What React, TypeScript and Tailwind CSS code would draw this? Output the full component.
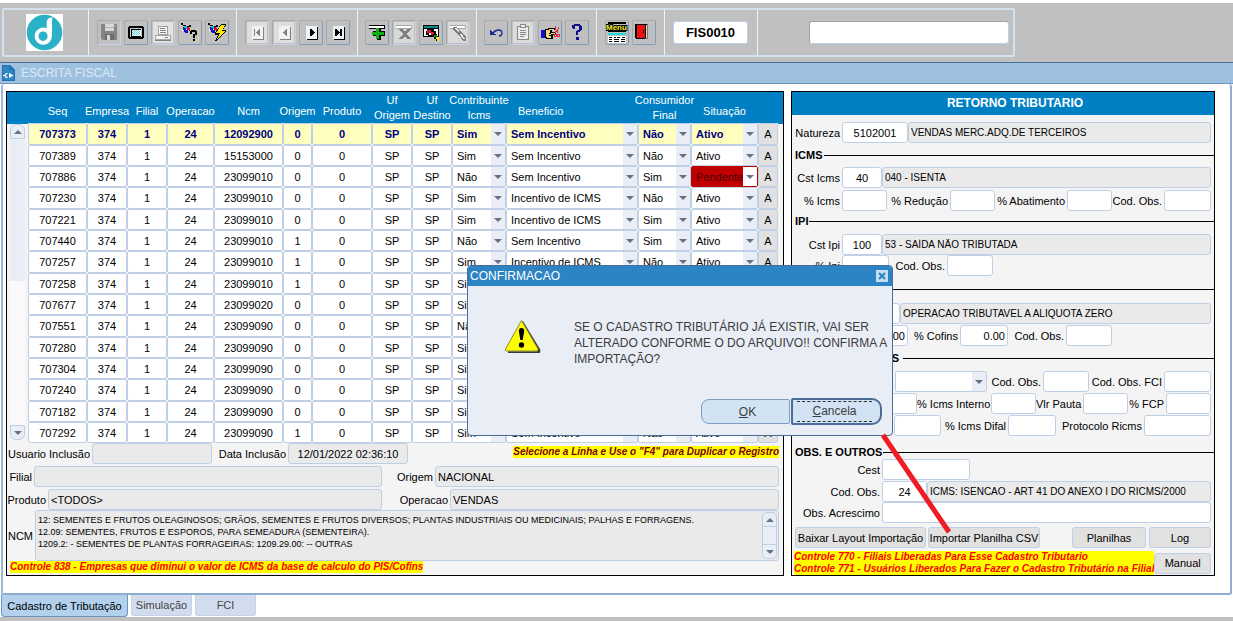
import { useId, type ReactNode } from "react";

const fieldBase = "h-[21px] min-w-0 rounded-[3px] border border-[#bfd0e6] text-black outline-none";

type FieldProps = {
  label: string;
  labelClass?: string;
  inputClass?: string;
  value?: string;
  hideLabel?: boolean;
  readOnly?: boolean;
};

function Field({ label, labelClass = "", inputClass = "", value = "", hideLabel, readOnly }: FieldProps) {
  const id = useId();
  const tone = readOnly ? "bg-[#eaeaea]" : "bg-white";
  return (
    <>
      {hideLabel ? (
        <span className={`shrink-0 ${labelClass}`} />
      ) : (
        <label htmlFor={id} className={`shrink-0 pr-0.5 text-right whitespace-nowrap ${labelClass}`}>
          {label}
        </label>
      )}
      <input
        id={id}
        aria-label={hideLabel ? label : undefined}
        defaultValue={value}
        readOnly={readOnly}
        className={`${fieldBase} text-[11px] ${tone} ${inputClass}`}
      />
    </>
  );
}

function Description({ label, value }: { label: string; value: string }) {
  return (
    <input
      aria-label={label}
      readOnly
      defaultValue={value}
      className={`${fieldBase} flex-1 bg-[#eaeaea] px-0.5 text-[10px]`}
    />
  );
}

function Section({ title, className = "", titleClass = "" }: { title?: string; className?: string; titleClass?: string }) {
  return (
    <div className={`flex h-3 items-center gap-px pl-[3px] ${className}`}>
      {title && <h3 className={`text-[11px] leading-3 font-bold whitespace-nowrap ${titleClass}`}>{title}</h3>}
      <span className="h-px flex-1 bg-black" />
    </div>
  );
}

function Row({ className = "", children }: { className?: string; children: ReactNode }) {
  return <div className={`flex items-center pr-[3px] ${className}`}>{children}</div>;
}

function Arrow({ up }: { up?: boolean }) {
  return (
    <svg width="8" height="4" viewBox="0 0 8 4" aria-hidden="true">
      <path d={up ? "M0 4L4 0L8 4Z" : "M0 0L4 4L8 0Z"} fill="#6a6f86" />
    </svg>
  );
}

function Picker({ label, value, tone, className = "" }: { label: string; value: string; tone: string; className?: string }) {
  const alert = value === "Pendente";
  return (
    <span className={`grid ${className}`}>
      <select
        aria-label={label}
        defaultValue={value}
        className={`col-start-1 row-start-1 h-full w-full min-w-0 appearance-none rounded-[2px] border pl-1 outline-none ${
          alert ? "border-[#c00000] bg-[#c00000] text-[#4a0000]" : `border-[#bfd0e6] ${tone}`
        }`}
      >
        <option value={value}>{value}</option>
      </select>
      <span
        className={`pointer-events-none col-start-1 row-start-1 my-px mr-px flex w-[14px] items-center justify-center justify-self-end ${
          alert ? "bg-white" : "bg-[#e9eef6]"
        }`}
      >
        <Arrow />
      </span>
    </span>
  );
}

/* ---------- toolbar ---------- */

function ToolButton({ label, disabled, children }: { label: string; disabled?: boolean; children: ReactNode }) {
  return (
    <button
      type="button"
      aria-label={label}
      className={`flex h-[25px] w-6 shrink-0 items-center justify-center rounded-[2px] border ${
        disabled ? "border-t-[#a8a8a8] border-l-[#a8a8a8] border-r-[#c6d3e4] border-b-[#c6d3e4]" : "border-t-[#a8a8a8] border-l-[#a8a8a8] border-r-[#7d9cc2] border-b-[#7d9cc2]"
      }`}
    >
      <svg width="22" height="23" viewBox="1 1 22 23" shapeRendering="crispEdges" aria-hidden="true">
        {children}
      </svg>
    </button>
  );
}

function Group({ className = "", children }: { className?: string; children: ReactNode }) {
  return (
    <div className={`flex items-center gap-[3px] border-r border-[#eaf2fb] pb-px ${className}`}>
      {children}
    </div>
  );
}

function Nav({ children, off }: { children: ReactNode; off?: boolean }) {
  const ink = off ? "#808080" : "#000";
  return (
    <>
      {off && <path fill="#dedede" d="M2 2h20v21H2z" />}
      <path fill={off ? "#f2f2f2" : "#eef3f8"} d="M7 6h12v14H7z" />
      <path fill={ink} d="M18 7h1v13h-1zM8 19h11v1H8z" />
      <g fill={ink}>{children}</g>
    </>
  );
}

function Torch() {
  return (
    <g>
      <path fill="#000" d="M3 3h2v2H3zM5 5h3v1H5zM8 6h3v1H8zM11 5h2v2h-2zM5 7h1v2H5z" />
      <path fill="#00c8d8" d="M6 6h3v3H6z" />
      <path fill="#d00020" d="M9 7h2v3H9zM11 8h1v3h-1z" />
      <path fill="#1010c0" d="M5 8h3v2h2v3H7v-1H6v-2H5z" />
      <path fill="#fff" d="M4 9h1v2H4zM8 9h1v1H8z" />
    </g>
  );
}

function Bar({ ink = "#000" }: { ink?: string }) {
  return (
    <>
      <path fill="#fff" d="M4 5h16v4H4z" />
      <path fill={ink} d="M4 5h16v1H4zM19 5h1v4h-1zM4 8h16v1H4z" />
    </>
  );
}

function Toolbar() {
  return (
    <header className="border-t-[3px] border-b border-t-white border-b-[#4b6c98] bg-[#c0c0c0] pt-[5px] pr-4 pb-[5px] pl-[2px]">
      <div className="flex h-[49px] w-[1013px] max-w-full rounded-[2px] border-2 border-[#d3e0f0]">
        <Group className="w-[85px] justify-center pr-1">
          <svg width="37" height="37" viewBox="0 0 37 37" role="img" aria-label="Logotipo">
            <rect width="37" height="37" fill="#fff" />
            <circle cx="18.500" cy="18.500" r="17.800" fill="#2bb1c5" />
            <path
              d="M26.500 3.300c-3.400.2-5.800 1.800-5.800 5.400v5.600A8.600 8.600 0 1 0 23 28.500c2.200-2 3-4.500 3-8V7zM17 17.600c2.600 0 4.600 2 4.600 4.700S19.600 27 17 27s-4.500-2-4.500-4.700 2-4.700 4.500-4.700z"
              fill="#fff"
              fillRule="evenodd"
            />
          </svg>
        </Group>
        <Group className="w-[148px] pl-2">
          <ToolButton label="Salvar" disabled>
            <path fill="#858585" d="M4 4h16v16H5v-1H4z" />
            <path fill="#d8d8d8" d="M8 4h9v7H8z" />
            <path fill="#b0b0b0" d="M8 7h9v1H8zM18 5h1v2h-1z" />
            <path fill="#6e6e6e" d="M8 14h9v6H8z" />
            <path fill="#d8d8d8" d="M10 15h3v5h-3z" />
          </ToolButton>
          <ToolButton label="Tela">
            <path fill="#000" d="M5 6h14v1h1v11h-1v1H5v-1H4V7h1z" />
            <path fill="#c8c8c8" d="M6 8h12v9H6z" />
            <path fill="#000" d="M7 9h10v8H7z" />
            <path fill="#dff" d="M8 10h9v6H8z" />
            <path fill="#7fc7c7" d="M8 10h1v1H8zm2 0h1v1h-1zm2 0h1v1h-1zm2 0h1v1h-1zM9 11h1v1H9zm2 0h1v1h-1zm2 0h1v1h-1zm2 0h1v1h-1zM8 12h1v1H8zm2 0h1v1h-1zm2 0h1v1h-1zm2 0h1v1h-1zM9 13h1v1H9zm2 0h1v1h-1zm2 0h1v1h-1zm2 0h1v1h-1zM8 14h1v1H8zm2 0h1v1h-1zm2 0h1v1h-1zm2 0h1v1h-1z" />
          </ToolButton>
          <ToolButton label="Imprimir" disabled>
            <path fill="#e2e2e2" d="M2 2h20v21H2z" />
            <path fill="#fafafa" stroke="#a0a0a0" d="M7.500 6.500h9v8h-9z" />
            <path fill="#808080" d="M9 8h5v1H9zM9 10h6v1H9zM9 12h6v1H9z" />
            <path fill="#f4f4f4" stroke="#a8a8a8" d="M4.500 15.500h15v4h-15z" />
            <path fill="#808080" d="M4 20h16v1H4zM14 17h3v1h-3z" />
          </ToolButton>
          <ToolButton label="Consultar">
            <Torch />
            <path fill="#eee35a" d="M12 9h1v1h-1zm2 2h1v1h-1zm4-2h1v1h-1zm2 2h1v1h-1zm-1 3h1v1h-1zm1 3h1v1h-1zm-1 3h1v1h-1zm-8 0h1v1h-1zm1-5h1v1h-1zm5 5h1v1h-1zm3-8h1v1h-1zm0 7h1v1h-1z" />
            <path fill="#000" d="M12 11h2v3h-2zM13 10h5v2h-5zM17 11h2v4h-2zM15 14h3v1h-3zM15 15h2v3h-2zM15 19h2v2h-2z" />
          </ToolButton>
          <ToolButton label="Executar consulta">
            <Torch />
            <path fill="#000" d="M16 4h5v2h-1l-2 4h3v1l-9 10h-2l3-6h-3v-2z" />
            <path fill="#ffea00" d="M16 5h4l-3 6h3l-8 8 3-6h-4z" />
          </ToolButton>
        </Group>
        <Group className="w-[121px] pl-2">
          <ToolButton label="Primeiro" disabled>
            <Nav off>
              <path d="M9 9h1v7H9zM14 9h1v7h-1zM13 10h1v5h-1zM12 11h1v3h-1zM11 12h1v1h-1z" />
            </Nav>
          </ToolButton>
          <ToolButton label="Anterior" disabled>
            <Nav off>
              <path d="M14 9h1v7h-1zM13 10h1v5h-1zM12 11h1v3h-1zM11 12h1v1h-1z" />
            </Nav>
          </ToolButton>
          <ToolButton label="Próximo">
            <Nav>
              <path d="M11 9h2v7h-2zM13 10h1v5h-1zM14 11h1v3h-1zM15 12h1v1h-1z" />
            </Nav>
          </ToolButton>
          <ToolButton label="Último">
            <Nav>
              <path d="M9 9h2v7H9zM11 10h1v5h-1zM12 11h1v3h-1zM13 12h1v1h-1zM14 9h2v7h-2z" />
            </Nav>
          </ToolButton>
        </Group>
        <Group className="w-[119px] pl-[7px]">
          <ToolButton label="Inserir registro">
            <Bar />
            <path fill="#000" d="M11 8h5v3h4v5h-4v4h-4v-4H8v-5h3z" />
            <path fill="#10b010" d="M11 8h3v4h5v3h-5v4h-3v-4H7v-3h4z" />
          </ToolButton>
          <ToolButton label="Excluir registro" disabled>
            <path fill="#d9d9d9" d="M2 2h20v21H2z" />
            <Bar ink="#a8a8a8" />
            <path fill="#808080" d="M7 9h4l2 3 2-3h4l-4 5 4 5h-4l-2-3-2 3H7l4-5z" />
          </ToolButton>
          <ToolButton label="Pesquisar">
            <path fill="#000" d="M4 5h16v12H4z" />
            <path fill="#008b8b" d="M5 6h14v2H5z" />
            <path fill="#fff" d="M5 9h14v7H5z" />
            <path fill="#000" d="M8 9h7v2h2v4h-3v2H9v-2H7v-4h1z" />
            <path fill="#e01030" d="M8 10h4v3H8zM12 12h3v3h-3z" />
            <path fill="#fff" d="M10 13h2v2h-2z" />
            <path fill="#000" d="M14 14h4v2h2v5h-3v-2h-2v-2h-1z" />
            <path fill="#109010" d="M15 15h3v2h-3z" />
            <path fill="#ffe600" d="M17 17h3v4h-2v-2h-1z" />
          </ToolButton>
          <ToolButton label="Limpar" disabled>
            <path fill="#d9d9d9" d="M2 2h20v21H2z" />
            <Bar ink="#a8a8a8" />
            <path fill="#808080" d="M7 7h3l10 9v5h-3l-4-6-6-5z" />
            <path fill="#ececec" d="M9 8h1l3 3v1h-1zM14 14h2l3 5h-2z" />
          </ToolButton>
        </Group>
        <Group className="w-[120px] pl-[7px]">
          <ToolButton label="Desfazer">
            <path fill="none" stroke="#1a2a90" strokeWidth="1.300" shapeRendering="auto" d="M9 13c3-4 9-4 9 0 0 2-1 3-3 3" />
            <path fill="#1a2a90" d="M6 10h1v1h1v1h1v1h1v1h2v1H6z" />
          </ToolButton>
          <ToolButton label="Colar" disabled>
            <path fill="#dcdcdc" d="M2 2h20v21H2z" />
            <path fill="#ececec" stroke="#888" d="M6.500 6.500h11v13h-11z" />
            <path fill="#e8e8e8" stroke="#888" d="M9.500 4.500h5v3h-5z" />
            <path fill="#888" d="M9 10h6v1H9zM9 12h6v1H9zM9 14h6v1H9zM9 16h4v1H9z" />
          </ToolButton>
          <ToolButton label="Recortar">
            <path fill="#1010d0" d="M3 10h4v8H3z" />
            <path fill="#000" d="M7 9h3V8h7v2h-3v2h4v3h-3v4H8v-1H7z" />
            <path fill="#f1dc72" d="M8 10h3V9h5v1h-4v3h5v1h-4v4H9v-1H8z" />
            <path fill="#000" d="M11 13h2v1h-2zM11 15h2v1h-2z" />
            <path fill="none" stroke="#e03040" d="M16.500 6.500h1v3l3 4M20.500 6.500v2l-4 5" />
            <path fill="none" stroke="#e03040" d="M16.500 14.500h2v2h-2zM19.500 14.500h2v2h-2z" />
          </ToolButton>
          <ToolButton label="Ajuda">
            <path fill="#10108a" d="M7 5h2V4h6v1h1v1h1v4h-1v1h-1v1h-2v3h-2v-4h1v-1h2V6h-4v3H8V8H7zM11 17h3v3h-3z" />
          </ToolButton>
        </Group>
        <Group className="w-[68px] pl-2">
          <ToolButton label="Menu">
            <path fill="#000" d="M3 2h18v2H3zM3 11h18v1H3z" />
            <text x="1" y="10" fill="#f5ee20" stroke="#000" strokeWidth="2" paintOrder="stroke" fontSize="8" fontWeight="bold" fontFamily="Liberation Sans, sans-serif">
              Menu
            </text>
            <path fill="#20d8d8" d="M3 13h18v2H3z" />
            <path fill="#fff" d="M3 16h18v7H3z" />
            <path fill="#000" d="M4 17h3v1H4zm5 0h2v1H9zm3 0h3v1h-3zm5 0h3v1h-3zM4 19h3v1H4zm5 0h5v1H9zm7 0h4v1h-4zM4 21h3v1H4zm5 0h5v1H9zm7 0h4v1h-4z" />
          </ToolButton>
          <ToolButton label="Sair">
            <path fill="#d8d8d8" stroke="#777" d="M7.500 4.500h8v14h-8z" />
            <path fill="#000" d="M3 4h2v14H3zM4 4h11v1H4z" />
            <path fill="#f01010" d="M5 5h8v12l-2 2-6-1z" />
            <path fill="#000" d="M11 10h1v3h-1zM13 5h1v13h-1zM4 18h9v1H4z" />
          </ToolButton>
        </Group>
        <Group className="w-[93px] pl-2">
          <input
            aria-label="Código da tela"
            defaultValue="FIS0010"
            className="h-[23px] w-[75px] rounded-[3px] border border-[#bfd0e6] bg-white text-center text-[13px] font-bold outline-none"
          />
        </Group>
        <div className="flex flex-1 items-center justify-end pr-1">
          <input
            aria-label="Pesquisa"
            className="h-[23px] w-[200px] rounded-[3px] border border-t-[#a0a4aa] border-r-[#bfd0e6] border-b-[#bfd0e6] border-l-[#a0a4aa] bg-white outline-none"
          />
        </div>
      </div>
    </header>
  );
}

/* ---------- grid of tax records ---------- */

type RecordRow = [string, string, string, string, string, string, string, string];

const B1 = "Sem Incentivo";
const B2 = "Incentivo de ICMS";

// seq, ncm, origem, contribuinte, beneficio, consumidor, situacao, uf
const records: RecordRow[] = [
  ["707373", "12092900", "0", "Sim", B1, "Não", "Ativo", "SP"],
  ["707389", "15153000", "0", "Sim", B1, "Não", "Ativo", "SP"],
  ["707886", "23099010", "0", "Não", B1, "Sim", "Pendente", "SP"],
  ["707230", "23099010", "0", "Sim", B2, "Não", "Ativo", "SP"],
  ["707221", "23099010", "0", "Sim", B2, "Sim", "Ativo", "SP"],
  ["707440", "23099010", "1", "Não", B1, "Sim", "Ativo", "SP"],
  ["707257", "23099010", "1", "Sim", B2, "Não", "Ativo", "SP"],
  ["707258", "23099010", "1", "Sim", B2, "Sim", "Ativo", "SP"],
  ["707677", "23099020", "0", "Sim", B1, "Sim", "Ativo", "SP"],
  ["707551", "23099090", "0", "Não", B1, "Sim", "Ativo", "SP"],
  ["707280", "23099090", "0", "Sim", B2, "Não", "Ativo", "SP"],
  ["707304", "23099090", "0", "Sim", B2, "Sim", "Ativo", "SP"],
  ["707240", "23099090", "0", "Sim", B2, "Não", "Ativo", "SP"],
  ["707182", "23099090", "0", "Sim", B2, "Sim", "Ativo", "SP"],
  ["707292", "23099090", "1", "Sim", B1, "Não", "Ativo", "SP"],
];

const columns: { title: string[]; width: string }[] = [
  { title: ["Seq"], width: "w-[59px]" },
  { title: ["Empresa"], width: "w-[40px]" },
  { title: ["Filial"], width: "w-[40px]" },
  { title: ["Operacao"], width: "w-[47px]" },
  { title: ["Ncm"], width: "w-[69px]" },
  { title: ["Origem"], width: "w-[29px]" },
  { title: ["Produto"], width: "w-[60px]" },
  { title: ["Uf", "Origem"], width: "w-[40px]" },
  { title: ["Uf", "Destino"], width: "w-[40px]" },
  { title: ["Contribuinte", "Icms"], width: "w-[54px]" },
  { title: ["Beneficio"], width: "" },
  { title: ["Consumidor", "Final"], width: "w-[53px]" },
  { title: ["Situação"], width: "w-[67px]" },
  { title: [], width: "w-[20px]" },
];

function RecordTable() {
  return (
    <div className="flex">
      <div className="flex w-[21px] flex-col">
        <div className="h-8 bg-[#0080c4]" />
        <div className="mx-[3px] flex flex-1 flex-col">
          <button type="button" aria-label="Rolar para cima" className="flex h-[15px] items-center justify-center rounded-t-[6px] border border-[#bfd0e6] bg-[#e9eef6]">
            <Arrow up />
          </button>
          <div className="h-[142px] bg-[#e9eef6]" />
          <div className="flex-1 bg-[#fafafa]" />
          <button type="button" aria-label="Rolar para baixo" className="mb-[3px] flex h-[15px] items-center justify-center rounded-b-[6px] border border-[#bfd0e6] bg-[#e9eef6]">
            <Arrow />
          </button>
        </div>
      </div>
      <div className="min-w-0 flex-1">
        <table className="w-full table-fixed border-collapse text-[11px]">
          <colgroup>
            {columns.map((c, i) => (
              <col key={i} className={c.width} />
            ))}
          </colgroup>
          <thead>
            <tr className="h-[31px] bg-[#0080c4] text-white">
              {columns.map((c, i) => (
                <th key={i} className="p-0 align-bottom font-normal">
                  <span
                    className={`flex flex-col leading-[15px] whitespace-nowrap ${c.title.length === 1 ? "pb-1" : ""} ${
                      c.title[0] === "Beneficio" ? "items-start pl-3" : "items-center"
                    }`}
                  >
                    {c.title.map((t) => (
                      <span key={t}>{t}</span>
                    ))}
                  </span>
                </th>
              ))}
            </tr>
          </thead>
          <tbody>
            {records.map(([seq, ncm, origem, contrib, benef, consum, situ, uf], r) => {
              const tone = r === 0 ? "bg-[#ffffc0] font-bold text-[#000080]" : "bg-white text-black";
              const texts = [seq, "374", "1", "24", ncm, origem, "0", uf, uf];
              const picks = [contrib, benef, consum, situ];
              return (
                <tr key={seq} className={r % 3 === 0 ? "h-[22px]" : "h-[21px]"}>
                  {texts.map((t, c) => (
                    <td key={c} className="h-[inherit] p-0">
                      <input
                        aria-label={`${columns[c].title.join(" ")} ${r + 1}`}
                        defaultValue={t}
                        className={`block h-[inherit] w-full rounded-[2px] border border-[#bfd0e6] text-center outline-none ${tone}`}
                      />
                    </td>
                  ))}
                  {picks.map((t, c) => (
                    <td key={c} className="h-[inherit] p-0">
                      <Picker label={`${columns[c + 9].title.join(" ")} ${r + 1}`} value={t} tone={tone} className="h-[inherit]" />
                    </td>
                  ))}
                  <td className="h-[inherit] p-0">
                    <button type="button" className="block h-[inherit] w-full rounded-[2px] border border-[#bfd0e6] bg-[#e1e1e1]">
                      A
                    </button>
                  </td>
                </tr>
              );
            })}
          </tbody>
        </table>
      </div>
      <div className="w-[5px]">
        <div className="h-8 bg-[#0080c4]" />
      </div>
    </div>
  );
}

function LeftPanel() {
  return (
    <section className="flex min-w-0 flex-1 flex-col border border-black bg-[#f4f4f4]">
      <RecordTable />
      <div className="flex items-center pr-1">
        <Field label="Usuario Inclusão" labelClass="w-[85px]" inputClass="w-[120px] px-1" readOnly />
        <Field label="Data Inclusão" labelClass="w-[76px]" inputClass="w-[120px] text-center" value="12/01/2022 02:36:10" readOnly />
        <p className="mb-1 ml-auto bg-[#ffff00] text-[10px] leading-3 font-bold whitespace-nowrap text-[#800000] italic">
          Selecione a Linha e Use o "F4" para Duplicar o Registro
        </p>
      </div>
      <div className="mt-0.5 flex items-center pr-1">
        <Field label="Filial" labelClass="w-[27px]" inputClass="w-[348px] px-1" readOnly />
        <Field label="Origem" labelClass="w-[53px]" inputClass="flex-1 px-0.5" value="NACIONAL" readOnly />
      </div>
      <div className="mt-0.5 flex items-center pr-1">
        <Field label="Produto" labelClass="w-[41px]" inputClass="w-[334px] px-0.5" value="<TODOS>" readOnly />
        <Field label="Operacao" labelClass="w-[68px]" inputClass="flex-1 px-0.5" value="VENDAS" readOnly />
      </div>
      <div className="flex items-center pr-1">
        <label htmlFor="ncm" className="w-7 pr-0.5 text-right">
          NCM
        </label>
        <div className="flex h-[51px] min-w-0 flex-1 rounded-[3px] border border-[#bfd0e6] bg-[#eaeaea]">
          <textarea
            id="ncm"
            readOnly
            className="h-full min-w-0 flex-1 resize-none overflow-hidden px-0.5 pt-[3px] text-[9px] leading-3 outline-none"
            defaultValue={
              "12: SEMENTES E FRUTOS OLEAGINOSOS; GRÃOS, SEMENTES E FRUTOS DIVERSOS; PLANTAS INDUSTRIAIS OU MEDICINAIS; PALHAS E FORRAGENS.\n12.09: SEMENTES, FRUTOS E ESPOROS, PARA SEMEADURA (SEMENTEIRA).\n1209.2: - SEMENTES DE PLANTAS FORRAGEIRAS: 1209.29.00: -- OUTRAS"
            }
          />
          <div className="m-px flex w-[15px] flex-col rounded-[5px] border border-[#bfd0e6] bg-[#e9eef6]">
            <button type="button" aria-label="Subir NCM" className="flex h-[14px] items-center justify-center border-b border-[#bfd0e6]">
              <Arrow up />
            </button>
            <span className="flex-1" />
            <button type="button" aria-label="Descer NCM" className="flex h-[14px] items-center justify-center border-t border-[#bfd0e6]">
              <Arrow />
            </button>
          </div>
        </div>
      </div>
      <p className="ml-[3px] self-start bg-[#ffff00] text-[10px] leading-3 font-bold whitespace-nowrap text-[#ff0000] italic">
        Controle 838 - Empresas que diminui o valor de ICMS da base de calculo do PIS/Cofins
      </p>
    </section>
  );
}

/* ---------- tax return form ---------- */

function Action({ className, children }: { className: string; children: ReactNode }) {
  return (
    <button type="button" className={`h-[21px] rounded-[3px] border border-[#bfd0e6] bg-[#e1e1e1] whitespace-nowrap ${className}`}>
      {children}
    </button>
  );
}

function RightPanel() {
  return (
    <section className="flex w-[424px] shrink-0 flex-col border border-black bg-[#f4f4f4]">
      <h2 className="h-[23px] bg-[#0080c4] pl-6 text-center text-[12px] leading-[23px] font-bold text-white">
        RETORNO TRIBUTARIO
      </h2>
      <Row className="mt-[7px]">
        <Field label="Natureza" labelClass="w-[50px]" inputClass="w-[66px] text-center" value="5102001" />
        <Description label="Descrição da natureza" value="VENDAS MERC.ADQ.DE TERCEIROS" />
      </Row>
      <Section title="ICMS" className="mt-[6px]" />
      <Row className="mt-[6px]">
        <Field label="Cst Icms" labelClass="w-[50px]" inputClass="w-10 text-center" value="40" />
        <Description label="Descrição Cst Icms" value="040 - ISENTA" />
      </Row>
      <Row className="mt-0.5">
        <Field label="% Icms" labelClass="w-[50px]" inputClass="w-[45px]" />
        <Field label="% Redução" labelClass="w-[63px]" inputClass="w-[45px]" />
        <Field label="% Abatimento" labelClass="w-[72px]" inputClass="w-[45px]" />
        <Field label="Cod. Obs." labelClass="w-[52px]" inputClass="flex-1" />
      </Row>
      <Section title="IPI" className="mt-1" />
      <Row className="mt-[7px]">
        <Field label="Cst Ipi" labelClass="w-[50px]" inputClass="w-10 text-center" value="100" />
        <Description label="Descrição Cst Ipi" value="53 - SAÍDA NÃO TRIBUTADA" />
      </Row>
      <Row>
        <Field label="% Ipi" labelClass="w-[50px]" inputClass="w-[47px]" />
        <Field label="Cod. Obs." labelClass="w-[58px]" inputClass="w-[46px]" />
      </Row>
      <Section className="mt-[7px]" />
      <Row className="mt-2">
        <Field label="Cst Pis/Cofins" hideLabel labelClass="w-[50px]" inputClass="w-[58px] text-center" />
        <Description label="Descrição Cst Pis/Cofins" value="OPERACAO TRIBUTAVEL A ALIQUOTA ZERO" />
      </Row>
      <Row className="mt-px">
        <Field label="% Pis" hideLabel labelClass="w-[50px]" inputClass="w-[66px] pr-0.5 text-right" value="0.00" />
        <Field label="% Cofins" labelClass="w-[52px]" inputClass="w-12 pr-0.5 text-right" value="0.00" />
        <Field label="Cod. Obs." labelClass="w-[58px]" inputClass="w-[46px]" />
      </Row>
      <Section title="OUTROS" titleClass="w-[107px] pr-[3px] text-right" className="mt-[6px]" />
      <Row className="mt-[7px]">
        <Picker label="Tipo" value="" tone="bg-white" className="ml-[103px] h-[21px] w-[92px] shrink-0" />
        <Field label="Cod. Obs." labelClass="w-14" inputClass="w-[46px]" />
        <Field label="Cod. Obs. FCI" labelClass="w-[75px]" inputClass="flex-1" />
      </Row>
      <Row className="mt-px">
        <Field label="% Mva" hideLabel labelClass="w-20" inputClass="w-[45px]" />
        <Field label="% Icms Interno" labelClass="w-[74px]" inputClass="w-[45px]" />
        <Field label="Vlr Pauta" labelClass="w-[47px]" inputClass="w-[45px]" />
        <Field label="% FCP" labelClass="w-[38px]" inputClass="flex-1" />
      </Row>
      <Row className="mt-px">
        <Field label="Difal" hideLabel labelClass="w-[102px]" inputClass="w-[47px]" />
        <Field label="% Icms Difal" labelClass="w-[67px]" inputClass="w-12" />
        <Field label="Protocolo Ricms" labelClass="w-[88px]" inputClass="flex-1" />
      </Row>
      <Section title="OBS. E OUTROS" className="mt-[10px]" />
      <Row className="mt-px">
        <Field label="Cest" labelClass="w-[90px]" inputClass="w-[88px]" />
      </Row>
      <Row className="mt-px">
        <Field label="Cod. Obs." labelClass="w-[90px]" inputClass="w-[45px] text-center" value="24" />
        <Description label="Descrição da observação" value="ICMS: ISENCAO - ART 41 DO ANEXO I DO RICMS/2000" />
      </Row>
      <Row>
        <Field label="Obs. Acrescimo" labelClass="w-[90px]" inputClass="flex-1 px-1" />
      </Row>
      <Row className="mt-1 pl-[3px]">
        <Action className="w-[131px]">Baixar Layout Importação</Action>
        <Action className="ml-0.5 w-[112px]">Importar Planilha CSV</Action>
        <Action className="ml-auto w-[74px]">Planilhas</Action>
        <Action className="ml-[3px] w-[62px]">Log</Action>
      </Row>
      <Row className="mt-[3px] justify-between pl-0.5">
        <p className="bg-[#ffff00] text-[10px] leading-3 font-bold whitespace-nowrap text-[#ff0000] italic">
          Controle 770 - Filiais Liberadas Para Esse Cadastro Tributario
          <br />
          Controle 771 - Usuários Liberados Para Fazer o Cadastro Tributário na Filial
        </p>
        <Action className="w-[62px]">Manual</Action>
      </Row>
    </section>
  );
}

/* ---------- confirmation window ---------- */

function ConfirmDialog() {
  return (
    <div
      role="dialog"
      aria-labelledby="confirm-title"
      className="absolute top-[265px] left-[467px] flex h-[171px] w-[426px] flex-col overflow-hidden rounded-[4px] border border-[#4b6c98] bg-[#e9eef6] text-[12px] text-[#3c3c3c]"
    >
      <div className="flex h-5 items-center justify-between bg-[#2c84c4] pr-1 pl-0.5 text-white">
        <h2 id="confirm-title">CONFIRMACAO</h2>
        <button type="button" aria-label="Fechar" className="flex size-3 items-center justify-center bg-[#c5def2]">
          <svg width="8" height="8" viewBox="0 0 8 8" aria-hidden="true">
            <path d="M1 1l6 6M7 1L1 7" stroke="#2c84c4" strokeWidth="2" />
          </svg>
        </button>
      </div>
      <div className="flex flex-1 items-start pt-[33px] pl-9">
        <svg width="37" height="34" viewBox="0 0 37 34" className="shrink-0" aria-hidden="true">
          <path d="M18 3L35 31q.6 2.500-2 2.500H4" fill="none" stroke="#3a3a3a" strokeWidth="2.500" strokeLinejoin="round" />
          <path d="M17.500 1.500L34 30q.5 2-1.500 2H2.800Q.6 32 1.500 30z" fill="#ffff00" stroke="#8a8a30" strokeWidth="1" strokeLinejoin="round" />
          <path d="M14.800 12q0-3 2.700-3t2.700 3l-1.500 9h-2.400z" fill="#000" />
          <circle cx="17.500" cy="26" r="2.700" fill="#000" />
        </svg>
        <p className="ml-[33px] leading-4 whitespace-nowrap">
          SE O CADASTRO TRIBUTÁRIO JÁ EXISTIR, VAI SER
          <br />
          ALTERADO CONFORME O DO ARQUIVO!! CONFIRMA A
          <br />
          IMPORTAÇÃO?
        </p>
      </div>
      <div className="mr-[10px] mb-[10px] flex h-[27px] items-stretch justify-end gap-px">
        <button type="button" className="my-px w-[89px] rounded-l-[8px] rounded-r-[2px] border border-[#7d9cc2] bg-[#d2e4f4] pl-1">
          <span className="underline">O</span>K
        </button>
        <button type="button" className="w-[91px] rounded-l-[2px] rounded-r-[10px] border-2 border-[#4b6c98] bg-[#d2e4f4] pr-2 pl-1">
          <span className="block border-y border-dashed border-[#303030] leading-[19px]">
            <span className="underline">C</span>ancela
          </span>
        </button>
      </div>
    </div>
  );
}

function Tabs() {
  return (
    <nav className="flex h-[22px] items-start gap-[3px] bg-white">
      <button type="button" className="h-[22px] w-[127px] rounded-b-[4px] border border-t-0 border-[#6f93bb] bg-[#b1d1ec]">
        Cadastro de Tributação
      </button>
      <button type="button" className="h-[21px] w-[61px] rounded-b-[3px] border border-t-0 border-[#c3d2e6] bg-[#d1ddee] text-[#444]">
        Simulação
      </button>
      <button type="button" className="h-[21px] w-[61px] rounded-b-[3px] border border-t-0 border-[#c3d2e6] bg-[#d1ddee] text-[#444]">
        FCI
      </button>
    </nav>
  );
}

export default function App() {
  return (
    <div className="relative min-h-screen bg-[#c0c0c0] font-['Liberation_Sans',Arial,sans-serif] text-[11px] leading-[14px] text-black">
      <Toolbar />
      <div className="flex h-[21px] items-center gap-[6px] border-b border-[#6f93bb] bg-[#9fc1e0] pl-0.5">
        <svg width="13" height="16" viewBox="0 0 13 16" aria-hidden="true">
          <path d="M0 0h8l5 5v11H0z" fill="#2f86c8" />
          <path d="M.5.500h7V5h5v10.500H.5z" fill="none" stroke="#2272b0" />
          <path d="M8 0l5 5H8z" fill="#2272b0" />
          <path d="M5.500 8.700H4.300L2.800 10.500l1.500 1.800h1.200M1 10.500h1.500" fill="none" stroke="#fff" strokeWidth="1.200" />
          <path d="M7 8l4.500 2.500L7 13z" fill="#fff" />
        </svg>
        <h1 className="text-[12px] text-[#dbe9f6]">ESCRITA FISCAL</h1>
      </div>
      <main className="bg-white pl-px">
        <div className="mr-px flex gap-[7px] rounded-t-[3px] rounded-br-[3px] border-2 border-t-0 border-r-[#8eacd0] border-b-[#8eacd0] border-l-[#9db7d6] bg-white pt-[7px] pr-[15px] pb-[17px] pl-[3px]">
          <LeftPanel />
          <RightPanel />
        </div>
        <Tabs />
      </main>
      <ConfirmDialog />
      <svg width="80" height="110" viewBox="0 0 80 110" className="pointer-events-none absolute top-[430px] left-[876px]" aria-hidden="true">
        <path d="M7 5L73 102" stroke="#ee1c24" strokeWidth="5" />
      </svg>
    </div>
  );
}
